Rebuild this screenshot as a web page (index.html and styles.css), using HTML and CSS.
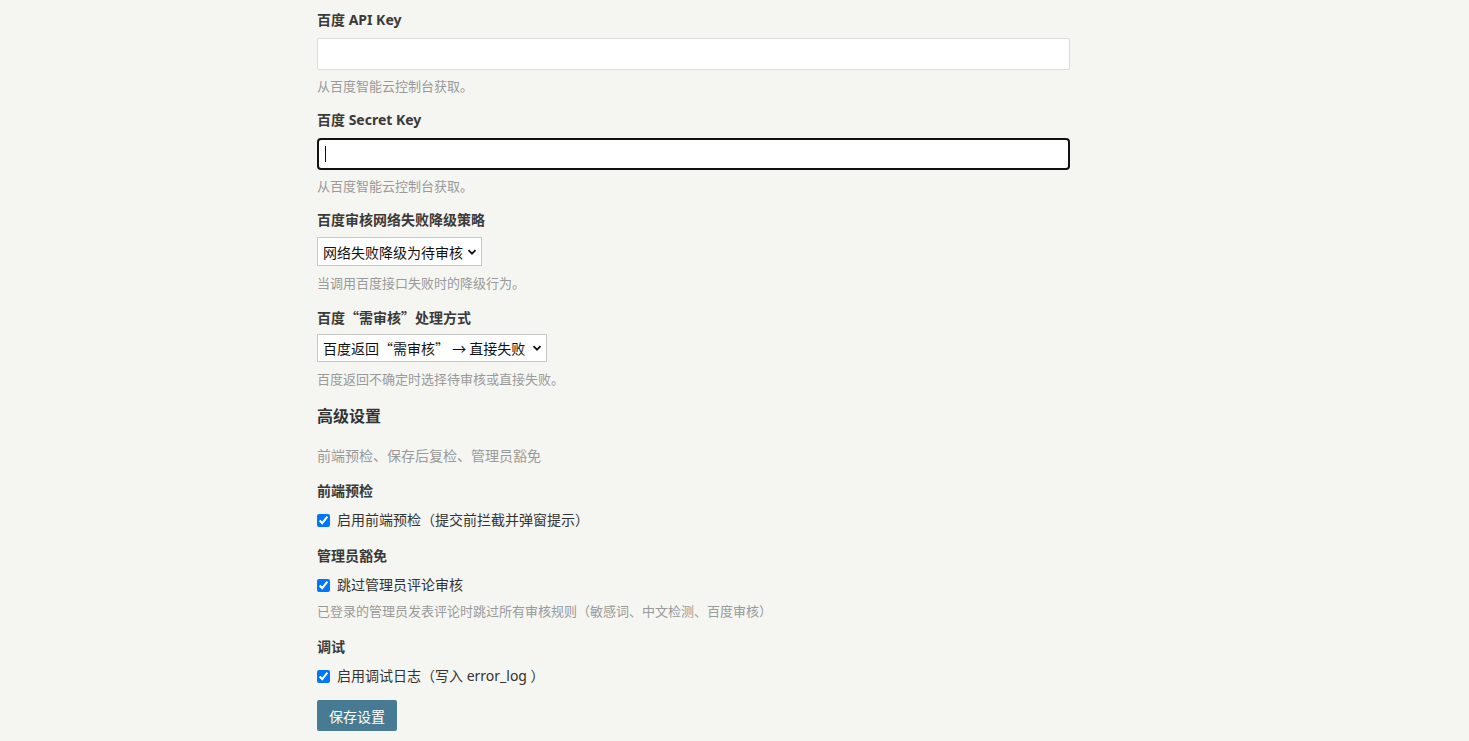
FILE: index.html
```html
<!DOCTYPE html>
<html lang="zh-CN">
<head>
<meta charset="utf-8">
<title>设置</title>
<link rel="stylesheet" href="styles.css">
</head>
<body>
<div class="wrap">
  <div class="label l-first">百度 API Key</div>
  <input class="text-input" type="text">
  <div class="help">从百度智能云控制台获取。</div>

  <div class="label">百度 Secret Key</div>
  <div class="input-box">
    <input class="text-input focused" type="text">
    <span class="caret"></span>
  </div>
  <div class="help">从百度智能云控制台获取。</div>

  <div class="label">百度审核网络失败降级策略</div>
  <div class="select sel-1">网络失败降级为待审核<svg class="chev" viewBox="0 0 10 10"><path d="M1.5 3.2 L5 6.7 L8.5 3.2" fill="none" stroke="#111" stroke-width="1.8"/></svg></div>
  <div class="help">当调用百度接口失败时的降级行为。</div>

  <div class="label cjk">百度“需审核”处理方式</div>
  <div class="select sel-2 cjk">百度返回“需审核” → 直接失败<svg class="chev" viewBox="0 0 10 10"><path d="M1.5 3.2 L5 6.7 L8.5 3.2" fill="none" stroke="#111" stroke-width="1.8"/></svg></div>
  <div class="help">百度返回不确定时选择待审核或直接失败。</div>

  <h3 class="section">高级设置</h3>
  <div class="desc">前端预检、保存后复检、管理员豁免</div>

  <div class="label l-sec">前端预检</div>
  <label class="check"><input type="checkbox" checked>启用前端预检（提交前拦截并弹窗提示）</label>

  <div class="label l-sec2">管理员豁免</div>
  <label class="check"><input type="checkbox" checked>跳过管理员评论审核</label>
  <div class="help help-check">已登录的管理员发表评论时跳过所有审核规则（敏感词、中文检测、百度审核）</div>

  <div class="label l-sec2">调试</div>
  <label class="check"><input type="checkbox" checked>启用调试日志（写入 error_log ）</label>

  <button class="save" type="button">保存设置</button>
</div>
</body>
</html>
```

FILE: styles.css
```css
html, body {
  margin: 0;
  padding: 0;
  background: #f5f5f1;
}
body {
  font-family: "Noto Sans", "Noto Sans CJK SC", sans-serif;
  color: #333;
}
.wrap {
  width: 835px;
  margin: 0 auto;
  display: flex;
  flex-direction: column;
  align-items: flex-start;
}
.cjk {
  font-family: "Noto Sans CJK SC", "Noto Sans", sans-serif;
}
.label {
  font-size: 14px;
  font-weight: 700;
  line-height: 20px;
  color: #3a3a3a;
  margin-top: 14px;
}
.l-first { margin-top: 10px; }
.l-sec { margin-top: 15px; }
.l-sec2 { margin-top: 16px; }
.input-box {
  position: relative;
  margin-top: 8px;
}
.input-box .text-input { margin-top: 0; }
.caret {
  position: absolute;
  left: 8px;
  top: 8px;
  width: 1px;
  height: 16px;
  background: #111;
}
.text-input {
  display: block;
  box-sizing: border-box;
  width: 753px;
  height: 32px;
  margin: 8px 0 0 0;
  padding: 0 8px;
  background: #fff;
  border: 1px solid #dcdcdc;
  border-radius: 2px;
  outline: none;
  font-size: 14px;
}
.text-input.focused {
  border: 2px solid #111;
  border-radius: 4px;
}
.help {
  font-size: 13px;
  line-height: 20px;
  color: #9a9a9a;
  margin-top: 6px;
}
.select {
  box-sizing: border-box;
  display: flex;
  align-items: center;
  margin-top: 7px;
  padding: 0 4px 0 5px;
  background: #fff;
  border: 1px solid #c8c8c8;
  font-size: 14px;
  color: #111;
  white-space: nowrap;
}
.sel-1 { height: 29px; width: 165px; }
.sel-2 { height: 28px; width: 230px; }
.chev {
  width: 10px;
  height: 10px;
  margin-left: auto;
}
.select + .help { margin-top: 7px; }
.section {
  margin: 15px 0 0 0;
  font-size: 16px;
  font-weight: 700;
  line-height: 24px;
  color: #333;
}
.desc {
  margin-top: 18px;
  font-size: 14px;
  line-height: 20px;
  color: #9a9a9a;
}
.check {
  display: flex;
  align-items: center;
  margin-top: 9px;
  font-size: 14px;
  line-height: 20px;
  color: #333;
}
.check input {
  width: 13px;
  height: 13px;
  margin: 0 7px 0 0;
  accent-color: #0075ff;
}
.help-check { margin-top: 6px; }
.save {
  margin-top: 14px;
  width: 80px;
  height: 31px;
  border: none;
  border-radius: 2px;
  background: #477b93;
  color: #fff;
  font-family: "Noto Sans", "Noto Sans CJK SC", sans-serif;
  font-size: 14px;
  padding: 0;
}
```
